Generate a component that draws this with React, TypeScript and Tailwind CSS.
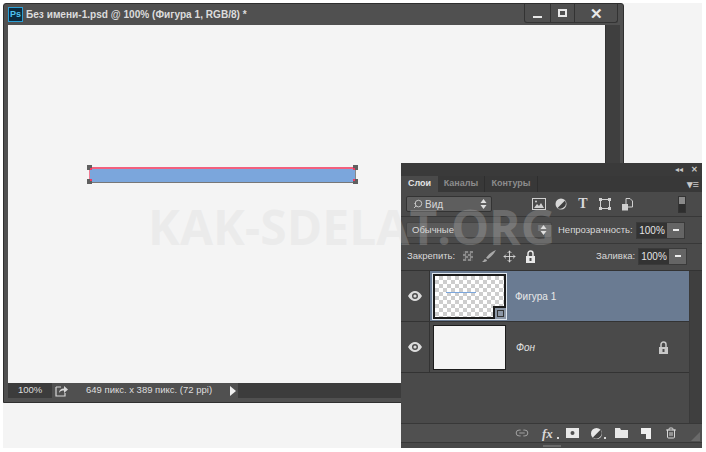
import { Link2, Move, Search, Trash2 } from "lucide-react";

const font = "font-['Liberation_Sans',sans-serif]";

function Handle({ className, dot }: { className: string; dot: string }) {
  return (
    <div className={`absolute h-[5px] w-[5px] bg-[#5f5f5f] ${className}`}>
      <div className={`absolute h-[2px] w-[2px] bg-[#f03a62] ${dot}`} />
    </div>
  );
}

function WindowButtons() {
  return (
    <div className="flex h-[19px] items-stretch rounded-b-[3px] border border-t-0 border-[#333] bg-[#4f4f4f]">
      <div className="flex w-[25px] items-end justify-center pb-[4px]">
        <div className="h-[2px] w-[9px] bg-[#e8e8e8]" />
      </div>
      <div className="flex w-[25px] items-center justify-center border-x border-[#333]">
        <div className="h-[8px] w-[9px] border-2 border-[#e8e8e8]" />
      </div>
      <div className="flex w-[42px] items-center justify-center text-[15px] leading-none font-bold text-[#e8e8e8]">✕</div>
    </div>
  );
}

function DocumentWindow() {
  return (
    <div className="absolute top-[3px] left-[3px] flex h-[400px] w-[621px] flex-col rounded-t-[3px] border border-[#2f2f2f] bg-[#505050]">
      <div className="flex h-[21px] shrink-0 items-start justify-between pl-[4px]">
        <div className="flex items-center gap-[3px] pt-[3px]">
          <div className="flex h-[15px] w-[15px] items-center justify-center border border-[#2a9fd6] bg-[#0c2a3e] text-[9px] font-bold text-[#4fc3f0]">Ps</div>
          <span className="text-[10.100px] font-bold text-[#dcdcdc]">Без имени-1.psd @ 100% (Фигура 1, RGB/8) *</span>
        </div>
        <div className="mr-[5px]">
          <WindowButtons />
        </div>
      </div>
      <div className="flex min-h-0 flex-1 pr-[3px] pl-[4px]">
        <div className="relative flex-1 bg-[#f4f4f4]">
          <div className="absolute top-[142px] left-[81px] h-[16px] w-[267px] border border-t-2 border-r-[#888] border-b-[#777] border-l-[#f07a92] border-t-[#f2607e] bg-[#7ba6dc]" />
          <Handle className="top-[140px] left-[79px]" dot="right-0 bottom-0" />
          <Handle className="top-[140px] left-[345px]" dot="bottom-0 left-0" />
          <Handle className="top-[154px] left-[79px]" dot="top-0 right-0" />
          <Handle className="top-[154px] left-[345px]" dot="top-0 left-0" />
        </div>
        <div className="w-[15px] shrink-0 border-l border-[#333] bg-[#3f3f3f]" />
      </div>
      <div className="shrink-0 pr-[3px] pb-[4px] pl-[4px]">
        <div className="flex h-[15px] items-center bg-[#3c3c3c] text-[9.500px] text-[#dedede]">
          <div className="w-[44px] pl-[10px]">100%</div>
          <div className="flex h-full w-[186px] items-center bg-[#505050]">
            <svg width="14" height="12" viewBox="0 0 14 12" className="ml-[3px]">
              <path d="M1 2h5M1 2v9h9V8" fill="none" stroke="#d8d8d8" strokeWidth="1.2" />
              <path d="M4 8c0-3 2-4.500 5-4.500V1l4 3.500L9 8V5.500C7 5.500 5 6 4 8z" fill="#d8d8d8" />
            </svg>
            <span className="ml-[17px] w-[125px] whitespace-nowrap">649 пикс. x 389 пикс. (72 ppi)</span>
            <svg width="8" height="10" viewBox="0 0 8 10" className="ml-[18px]">
              <path d="M1 0l6 5-6 5z" fill="#f0f0f0" />
            </svg>
          </div>
        </div>
      </div>
    </div>
  );
}

function Stepper() {
  return (
    <svg width="7" height="10" viewBox="0 0 7 10">
      <path d="M3.500 0L6.500 4H.5zM3.500 10L.5 6h6z" fill="#e0e0e0" />
    </svg>
  );
}

function PercentField() {
  return (
    <div className="flex h-[17px] w-[49px] border border-[#3a3a3a]">
      <div className="flex flex-1 items-center justify-center bg-[#333] text-[10px] text-[#e4e4e4]">100%</div>
      <div className="flex w-[17px] items-center justify-center bg-[#656565]">
        <div className="h-[2px] w-[6px] bg-[#eee]" />
      </div>
    </div>
  );
}

function LayerEye() {
  return (
    <svg width="14" height="10" viewBox="0 0 14 10">
      <path fillRule="evenodd" d="M0 5c2-3.300 4.500-5 7-5s5 1.700 7 5c-2 3.300-4.500 5-7 5S2 8.300 0 5zm7-3a3 3 0 1 0 0 6 3 3 0 0 0 0-6z" fill="#dcdcdc" />
      <circle cx="7" cy="5" r="1.600" fill="#dcdcdc" />
    </svg>
  );
}

function PadLock({ color, className }: { color: string; className: string }) {
  return (
    <svg width="11" height="13" viewBox="0 0 11 13" className={className}>
      <path d="M3 6V3.500a2.500 2.500 0 0 1 5 0V6" fill="none" stroke={color} strokeWidth="1.500" />
      <path fillRule="evenodd" d="M1 6h9v7H1zM4.500 8v3h2V8z" fill={color} />
    </svg>
  );
}

function FilterIcons() {
  return (
    <div className="ml-[40px] flex items-center gap-[10px]">
      <svg width="14" height="12" viewBox="0 0 14 12">
        <rect x=".5" y=".5" width="13" height="11" fill="none" stroke="#d0d0d0" />
        <path d="M2 10l3-4 2 2 2-3 3 5z" fill="#d0d0d0" />
        <circle cx="4" cy="3.500" r="1" fill="#d0d0d0" />
      </svg>
      <svg width="12" height="12" viewBox="0 0 12 12" className="-ml-px">
        <circle cx="6" cy="6" r="5.500" fill="#d8d8d8" />
        <path d="M10 2.500A5.500 5.500 0 0 1 2.500 10z" fill="#3f3f3f" />
      </svg>
      <span className="w-[12px] text-center font-['Liberation_Serif',serif] text-[14px] leading-none font-bold text-[#d8d8d8]">T</span>
      <svg width="12" height="12" viewBox="0 0 12 12">
        <rect x="1.500" y="1.500" width="9" height="9" fill="none" stroke="#d0d0d0" />
        <path d="M0 0h3v3H0zM9 0h3v3H9zM0 9h3v3H0zM9 9h3v3H9z" fill="#d0d0d0" />
      </svg>
      <svg width="12" height="13" viewBox="0 0 12 13">
        <path d="M5 .5h4l2.500 2.500v6H5z" fill="none" stroke="#d0d0d0" />
        <rect x="1" y="6" width="6" height="6.500" fill="#d0d0d0" />
      </svg>
    </div>
  );
}

function BottomBar() {
  return (
    <div className="relative flex h-[19px] shrink-0 items-center border-t border-[#383838] bg-[#505050] pl-[114px] text-[#d8d8d8]">
      <Link2 size={14} strokeWidth={1.6} className="text-[#a8a8a8]" />
      <span className="ml-[13px] w-[15px] font-['Liberation_Serif',serif] text-[13px] leading-none font-bold italic">fx</span>
      <div className="mt-[9px] h-[2px] w-[2px] bg-[#d8d8d8]" />
      <svg width="13" height="10" viewBox="0 0 13 10" className="ml-[7px]">
        <path fillRule="evenodd" d="M0 0h13v10H0zM6.500 3a2 2 0 1 0 0 4 2 2 0 0 0 0-4z" fill="#e8e8e8" />
      </svg>
      <svg width="11" height="11" viewBox="0 0 11 11" className="ml-[12px]">
        <circle cx="5.500" cy="5.500" r="5.500" fill="#e8e8e8" />
        <path d="M9.500 1.800A5.500 5.500 0 0 1 1.800 9.500z" fill="#444" />
      </svg>
      <div className="mt-[9px] ml-[2px] h-[2px] w-[2px] bg-[#d8d8d8]" />
      <svg width="13" height="10" viewBox="0 0 13 10" className="ml-[9px]">
        <path d="M0 0h5l1 2h7v8H0z" fill="#e8e8e8" />
      </svg>
      <svg width="10" height="11" viewBox="0 0 10 11" className="ml-[13px]">
        <path d="M0 0h10v11H5V6H0z" fill="#f0f0f0" />
      </svg>
      <Trash2 size={12} strokeWidth={2} className="ml-[14px] text-[#d8d8d8]" />
      <svg width="9" height="9" viewBox="0 0 9 9" className="absolute right-[2px] bottom-[1px]">
        <path d="M9 0v9H0z" fill="#6a6a6a" />
      </svg>
    </div>
  );
}

function LayersPanel() {
  return (
    <div className="absolute top-[163px] left-[401px] flex h-[285px] w-[301px] flex-col bg-[#4a4a4a] text-[#d8d8d8]">
      <div className="flex h-[13px] shrink-0 items-center justify-end gap-[8px] bg-[#3a3a3a] pr-[4px] text-[8px] leading-none text-[#c8c8c8]">
        <span>◂◂</span>
        <span className="font-bold">✕</span>
      </div>
      <div className="flex h-[16px] shrink-0 items-stretch bg-[#383838] text-[9px] font-bold text-[#8c8c8c]">
        <div className="flex w-[37px] items-center justify-center bg-[#4a4a4a] text-[#e4e4e4]">Слои</div>
        <div className="flex w-[47px] items-center justify-center border-r border-[#2e2e2e]">Каналы</div>
        <div className="flex w-[53px] items-center justify-center border-r border-[#2e2e2e]">Контуры</div>
        <div className="ml-auto flex items-center pr-[3px] text-[11px] leading-none text-[#c8c8c8]">▾≡</div>
      </div>

      <div className="flex h-[25px] shrink-0 items-center border-b border-[#383838] pl-[5px]">
        <div className="flex h-[16px] w-[86px] items-center justify-between rounded-[2px] border border-[#333] bg-[#5e5e5e] pr-[4px] pl-[6px] text-[10px]">
          <span className="flex items-center gap-[2px]">
            <Search size={10} strokeWidth={2} className="-scale-x-100" />
            Вид
          </span>
          <Stepper />
        </div>
        <FilterIcons />
        <div className="ml-[45px] flex h-[17px] w-[8px] flex-col border border-[#333]">
          <div className="flex-1 bg-[#8a8a8a]" />
          <div className="flex-1 bg-[#2e2e2e]" />
        </div>
      </div>

      <div className="flex h-[27px] shrink-0 items-center border-b border-[#383838] pl-[5px] text-[9.500px]">
        <div className="flex h-[16px] w-[146px] items-center justify-between rounded-[2px] border border-[#444] bg-[#5a5a5a] pr-[4px] pl-[5px]">
          <span>Обычные</span>
          <Stepper />
        </div>
        <span className="ml-[6px] w-[74px] whitespace-nowrap">Непрозрачность:</span>
        <div className="ml-[4px]">
          <PercentField />
        </div>
      </div>

      <div className="flex h-[27px] shrink-0 items-center border-b border-[#333] pb-[2px] pl-[6px] text-[9.500px]">
        <span className="w-[50px]">Закрепить:</span>
        <div className="ml-[6px] h-[10px] w-[10px] bg-[conic-gradient(#8a8a8a_25%,#555_0_50%,#8a8a8a_0_75%,#555_0)] bg-[length:5px_5px]" />
        <svg width="16" height="14" viewBox="0 0 16 14" className="ml-[8px]">
          <path d="M15 1C10 3 7 6 5 9l2 1c3-2 6-5 8-9zM4 10c-1 0-1 2-3 3 2 0 5 0 5-2z" fill="#a8a8a8" />
        </svg>
        <Move size={13} strokeWidth={1.6} className="ml-[6px] text-[#e0e0e0]" />
        <PadLock color="#e8e8e8" className="ml-[9px]" />
        <span className="ml-[60px] w-[38px] whitespace-nowrap">Заливка:</span>
        <div className="ml-[4px]">
          <PercentField />
        </div>
      </div>

      <div className="flex min-h-0 flex-1">
        <div className="flex w-[288px] flex-col">
          <div className="flex h-[51px] shrink-0 border-b border-[#333]">
            <div className="flex w-[29px] items-center justify-center border-r border-[#333]">
              <LayerEye />
            </div>
            <div className="flex flex-1 items-center bg-[#6a7b92] pl-[3px]">
              <div className="relative h-[45px] w-[73px] border-2 border-[#1c1c1c] bg-white bg-[conic-gradient(#cdcdcd_25%,#fff_0_50%,#cdcdcd_0_75%,#fff_0)] bg-[length:8px_8px] outline outline-[#dfe6ee]">
                <div className="absolute top-[16px] left-[11px] h-[1px] w-[30px] bg-[#7ba6dc]" />
                <div className="absolute right-[-2px] bottom-[-2px] flex h-[13px] w-[13px] items-center justify-center border-t-2 border-l-2 border-[#1c1c1c] bg-[#8c97a6]">
                  <div className="h-[7px] w-[7px] border border-[#333]" />
                </div>
              </div>
              <span className="ml-[9px] text-[10px] text-[#e8e8e8]">Фигура 1</span>
            </div>
          </div>
          <div className="flex h-[51px] shrink-0 border-b border-[#333]">
            <div className="flex w-[29px] items-center justify-center border-r border-[#333]">
              <LayerEye />
            </div>
            <div className="flex flex-1 items-center pl-[3px]">
              <div className="h-[45px] w-[73px] border border-[#1c1c1c] bg-[#f4f4f4]" />
              <span className="ml-[10px] w-[140px] text-[10px] text-[#e0e0e0] italic">Фон</span>
              <PadLock color="#c8c8c8" className="ml-[2px]" />
            </div>
          </div>
          <div className="flex-1" />
        </div>
        <div className="flex-1 border-l border-[#3a3a3a] bg-[#3f3f3f]" />
      </div>

      <BottomBar />
      <div className="flex h-[6px] shrink-0 items-center justify-center border-t border-[#383838] bg-[#484848]">
        <div className="h-[2px] w-[18px] bg-[#6a6a6a]" />
      </div>
    </div>
  );
}

export default function App() {
  return (
    <div className={`relative h-[452px] w-[706px] overflow-hidden bg-white ${font}`}>
      <div className="absolute top-[3px] left-[3px] h-[445px] w-[699px] bg-[#f4f4f4]" />
      <DocumentWindow />
      <LayersPanel />
      <div className="pointer-events-none absolute top-[193px] left-[148px] font-['Open_Sans',sans-serif] text-[48px] leading-[68px] font-bold whitespace-nowrap text-[#d0d0d0]/25">KAK-SDELAT.ORG</div>
    </div>
  );
}
